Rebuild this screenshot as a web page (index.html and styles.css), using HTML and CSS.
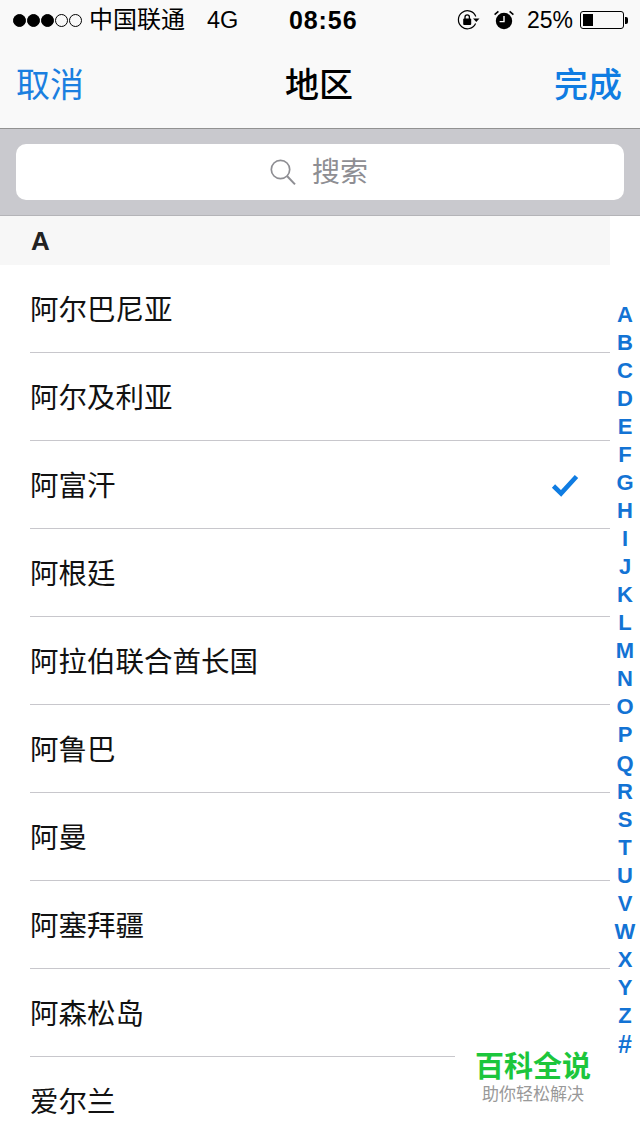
FILE: index.html
```html
<!DOCTYPE html>
<html lang="zh-CN">
<head>
  <meta charset="UTF-8" />
  <title>地区</title>
  <meta name="viewport" content="width=device-width, initial-scale=1" />
  <link rel="stylesheet" href="styles.css">
</head>
<body>
  <div class="page">
    <div class="top">
      <div class="status">
        <div class="status-left">
          <span class="dots"><i class="on"></i><i class="on"></i><i class="on"></i><i></i><i></i></span>
          <span class="carrier">中国联通</span>
          <span class="net">4G</span>
        </div>
        <div class="clock">08:56</div>
        <div class="status-right">
          <svg class="ico-lock" width="24" height="22" viewBox="0 0 24 22">
            <path d="M18.6 14.5A9 9 0 1 1 18.8 7.5" fill="none" stroke="#000" stroke-width="1.2"/>
            <path d="M16 9.5h6.5l-3.2 3.6z" fill="#000"/>
            <rect x="6.2" y="9.6" width="8" height="6.4" rx="1" fill="#000"/>
            <path d="M8 10V8a2.2 2.2 0 0 1 4.4 0v2" fill="none" stroke="#000" stroke-width="1.3"/>
          </svg>
          <svg class="ico-alarm" width="22" height="22" viewBox="0 0 22 22">
            <circle cx="11" cy="12" r="8.2" fill="#000"/>
            <path d="M11 7v5.6H6.6" fill="none" stroke="#fff" stroke-width="1.4"/>
            <path d="M1.6 5.6 5.4 2.4M20.4 5.6 16.6 2.4" stroke="#000" stroke-width="1.6"/>
          </svg>
          <span class="pct">25%</span>
          <div class="battery"><div class="battery-fill"></div></div>
          <div class="battery-tip"></div>
        </div>
      </div>
      <div class="nav">
        <span class="nav-btn">取消</span>
        <span class="nav-title">地区</span>
        <span class="nav-btn done">完成</span>
      </div>
    </div>

    <div class="search-bar">
      <div class="search-box">
        <svg width="28" height="28" viewBox="0 0 28 28">
          <circle cx="11.5" cy="11.5" r="9.2" fill="none" stroke="#8e8e93" stroke-width="1.7"/>
          <path d="M18 18l8 8.4" stroke="#8e8e93" stroke-width="2"/>
        </svg>
        <span>搜索</span>
      </div>
    </div>

    <div class="content">
      <div class="list">
        <div class="section">A</div>
        <div class="row">阿尔巴尼亚</div>
        <div class="row">阿尔及利亚</div>
        <div class="row">阿富汗
          <svg class="check" width="28" height="24" viewBox="0 0 28 24">
            <path d="M2.5 13l7.6 7.4L25.5 3.5" fill="none" stroke="#0f7ce2" stroke-width="4.6"/>
          </svg>
        </div>
        <div class="row">阿根廷</div>
        <div class="row">阿拉伯联合酋长国</div>
        <div class="row">阿鲁巴</div>
        <div class="row">阿曼</div>
        <div class="row">阿塞拜疆</div>
        <div class="row">阿森松岛</div>
        <div class="row">爱尔兰</div>
      </div>
      <div class="index">
        <span>A</span><span>B</span><span>C</span><span>D</span><span>E</span><span>F</span><span>G</span>
        <span>H</span><span>I</span><span>J</span><span>K</span><span>L</span><span>M</span><span>N</span>
        <span>O</span><span>P</span><span>Q</span><span>R</span><span>S</span><span>T</span><span>U</span>
        <span>V</span><span>W</span><span>X</span><span>Y</span><span>Z</span><span class="hash">#</span>
      </div>
    </div>

    <div class="watermark">
      <div class="wm-title">百科全说</div>
      <div class="wm-sub">助你轻松解决</div>
    </div>
  </div>
</body>
</html>
```

FILE: styles.css
```css
html, body {
  margin: 0;
  padding: 0;
}
body {
  font-family: "Liberation Sans", "Noto Sans CJK SC", sans-serif;
  background: #fff;
  color: #000;
}

.page {
  position: relative;
  width: 640px;
  height: 1136px;
  overflow: hidden;
}

.top {
  height: 128px;
  background: #f9f9f9;
  border-bottom: 1px solid #929292;
}

.status {
  height: 40px;
  position: relative;
  display: flex;
  align-items: center;
  justify-content: space-between;
}
.status-left {
  display: flex;
  align-items: center;
  padding-left: 13px;
}
.dots {
  display: flex;
  gap: 1px;
  margin-right: 7px;
}
.dots i {
  width: 13px;
  height: 13px;
  border: 1px solid #000;
  border-radius: 50%;
  box-sizing: border-box;
}
.dots i.on {
  background: #000;
}
.carrier {
  font-size: 24px;
  line-height: 36px;
  margin-bottom: 1px;
}
.net {
  margin-left: 22px;
  font-size: 23.5px;
}
.clock {
  position: absolute;
  left: 289px;
  top: 6px;
  font-size: 25px;
  font-weight: bold;
  letter-spacing: 0.9px;
}
.status-right {
  display: flex;
  align-items: center;
  padding-right: 12px;
}
.ico-alarm {
  margin-left: 11px;
}
.pct {
  margin-left: 12px;
  margin-right: 7px;
  font-size: 23px;
}
.ico-lock {
  margin-right: 1px;
}
.battery {
  width: 44px;
  height: 18px;
  border: 1px solid #000;
  border-radius: 3px;
  padding: 2px;
  box-sizing: border-box;
}
.battery-fill {
  width: 10px;
  height: 100%;
  background: #000;
}
.battery-tip {
  width: 3px;
  height: 7px;
  background: #000;
  border-radius: 0 2px 2px 0;
  margin-left: 1px;
}

.nav {
  height: 88px;
  display: flex;
  align-items: center;
  justify-content: space-between;
  padding: 0 18px 4px 16px;
  box-sizing: border-box;
}
.nav-btn {
  font-size: 34px;
  color: #1a7fe0;
}
.nav-btn.done {
  font-weight: 500;
  color: #0f7ce2;
}
.nav-title {
  font-size: 34px;
  font-weight: 500;
}

.search-bar {
  height: 87px;
  padding: 15px 16px;
  box-sizing: border-box;
  background: #c9c9ce;
  border-bottom: 1px solid #b4b4b8;
}
.search-box {
  height: 56px;
  padding-bottom: 5px;
  padding-right: 3px;
  box-sizing: border-box;
  background: #fff;
  border-radius: 10px;
  display: flex;
  align-items: center;
  justify-content: center;
  gap: 15px;
  font-size: 28px;
  color: #8e8e93;
}
.search-box svg {
  margin-top: 5px;
}

.content {
  display: flex;
}
.list {
  width: 610px;
  flex: none;
}
.section {
  height: 49px;
  line-height: 50px;
  padding-left: 31px;
  background: #f7f7f7;
  font-size: 26px;
  font-weight: bold;
  color: #222;
}
.row {
  height: 88px;
  margin-left: 30px;
  padding-right: 31px;
  padding-bottom: 2px;
  box-sizing: border-box;
  border-bottom: 1px solid #c8c7cc;
  display: flex;
  align-items: center;
  justify-content: space-between;
  font-size: 28.5px;
  color: #111;
}
.check {
  margin-top: 2px;
}

.index {
  width: 30px;
  padding-top: 85px;
  display: flex;
  flex-direction: column;
  align-items: center;
  font-size: 22px;
  font-weight: bold;
  color: #1373d4;
}
.index span {
  height: 28.04px;
  line-height: 28px;
}
.index .hash {
  font-size: 25px;
}

.watermark {
  position: absolute;
  left: 455px;
  top: 1040px;
  width: 156px;
  height: 70px;
  background: #fff;
  text-align: center;
}
.wm-title {
  margin-top: 10px;
  font-size: 29px;
  line-height: 34px;
  font-weight: bold;
  color: #1cc63c;
}
.wm-sub {
  font-size: 17px;
  line-height: 22px;
  color: #999;
}
```
